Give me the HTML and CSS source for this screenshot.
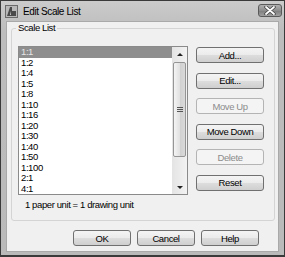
FILE: index.html
```html
<!DOCTYPE html>
<html lang="en">
<head>
    <meta charset="UTF-8">
    <title>Edit Scale List</title>
    <link rel="stylesheet" href="styles.css">
</head>
<body>

    <div class="window">
        <div class="titlebar">
            <svg class="app-icon" width="13" height="13" viewBox="0 0 13 13">
                <rect x="0.5" y="0.5" width="12" height="12" fill="#b8b8b8" stroke="#6a6a6a"/>
                <polygon points="2,11 5,2 7,2 7,6 11,6 11,11" fill="#4a4a4a"/>
                <polygon points="5,10 6,6 6,10" fill="#d0d0d0"/>
            </svg>
            <span class="title">Edit Scale List</span>
            <button class="close-btn">
                <svg width="12" height="9" viewBox="0 0 12 9">
                    <path d="M2 1 L10 8 M10 1 L2 8" stroke="#444" stroke-width="3.4" stroke-linecap="round"/>
                    <path d="M2 1 L10 8 M10 1 L2 8" stroke="#fff" stroke-width="1.8" stroke-linecap="round"/>
                </svg>
            </button>
        </div>

        <div class="client">
            <fieldset class="group">
                <legend>Scale List</legend>
                <div class="group-body">
                    <div class="list-col">
                        <div class="listbox">
                            <ul class="items">
                                <li class="selected">1:1</li>
                                <li>1:2</li>
                                <li>1:4</li>
                                <li>1:5</li>
                                <li>1:8</li>
                                <li>1:10</li>
                                <li>1:16</li>
                                <li>1:20</li>
                                <li>1:30</li>
                                <li>1:40</li>
                                <li>1:50</li>
                                <li>1:100</li>
                                <li>2:1</li>
                                <li>4:1</li>
                            </ul>
                            <div class="scrollbar">
                                <div class="arrow arrow-up"></div>
                                <div class="track">
                                    <div class="thumb">
                                        <span class="grip"></span>
                                    </div>
                                </div>
                                <div class="arrow arrow-down"></div>
                            </div>
                        </div>
                        <p class="note">1 paper unit = 1 drawing unit</p>
                    </div>

                    <div class="side-buttons">
                        <button class="btn">Add...</button>
                        <button class="btn">Edit...</button>
                        <button class="btn" disabled>Move Up</button>
                        <button class="btn">Move Down</button>
                        <button class="btn" disabled>Delete</button>
                        <button class="btn">Reset</button>
                    </div>
                </div>
            </fieldset>

            <div class="footer-buttons">
                <button class="btn btn-wide">OK</button>
                <button class="btn btn-wide">Cancel</button>
                <button class="btn btn-wide">Help</button>
            </div>
        </div>
    </div>

</body>
</html>
```

FILE: styles.css
```css
body {
    margin: 0;
    font-family: 'Liberation Sans', Arial, sans-serif;
    font-size: 9.5px;
    letter-spacing: -0.4px;
    color: #000;
    background-color: #d0d0d0;
}

.window {
    width: 285px;
    height: 257px;
    box-sizing: border-box;
    border: 1px solid #3a3a3a;
    border-bottom-width: 2px;
    background: linear-gradient(#cbcbcb, #bdbdbd 30px, #bababa);
    padding: 0 5px 3px 5px;
    display: flex;
    flex-direction: column;
}

.titlebar {
    height: 20px;
    display: flex;
    align-items: center;
    margin: 0 -4px;
}

.app-icon {
    margin-left: 3px;
    display: block;
}

.title {
    margin-left: 5px;
    font-size: 10px;
    letter-spacing: -0.4px;
}

.close-btn {
    margin-left: auto;
    margin-right: 1px;
    align-self: flex-start;
    margin-top: 3px;
    width: 24px;
    height: 13px;
    padding: 0;
    border: 1px solid #5a5a5a;
    border-radius: 3px;
    background: linear-gradient(#b0b0b0, #8e8e8e 50%, #7c7c7c 51%, #a0a0a0);
    display: flex;
    align-items: center;
    justify-content: center;
}

.close-btn svg {
    display: block;
}

.client {
    flex: 1;
    background-color: #f0f0f0;
    border: 1px solid #a9a9a9;
    padding: 0 3px 0 4px;
    display: flex;
    flex-direction: column;
}

.group {
    margin: 0;
    border: 1px solid #d4d4d4;
    border-radius: 3px;
    padding: 12px 10px 9px 6px;
    min-width: 0;
}

.group legend {
    padding: 0 2px;
    margin-left: -2px;
    line-height: 12px;
    font-size: 9.5px;
}

.group-body {
    display: flex;
    gap: 8px;
}

.list-col {
    width: 170px;
}

.listbox {
    height: 149px;
    box-sizing: border-box;
    border: 1px solid #8a8a8a;
    background-color: #fff;
    display: flex;
}

.items {
    list-style: none;
    margin: 0;
    padding: 0;
    flex: 1;
}

.items li {
    height: 10.5px;
    line-height: 10.5px;
    padding-left: 2px;
}

.items li.selected {
    background-color: #8e8e8e;
    color: #e6e6e6;
}

.scrollbar {
    width: 15px;
    background: linear-gradient(90deg, #e4e4e4, #f2f2f2);
    display: flex;
    flex-direction: column;
}

.arrow {
    height: 14px;
    display: flex;
    align-items: center;
    justify-content: center;
}

.arrow::after {
    content: "";
    border-left: 3px solid transparent;
    border-right: 3px solid transparent;
}

.arrow-up::after {
    border-bottom: 3px solid #222;
}

.arrow-down::after {
    border-top: 3px solid #222;
}

.track {
    flex: 1;
}

.thumb {
    margin: 1px 1px 0 1px;
    height: 95px;
    box-sizing: border-box;
    border: 1px solid #959595;
    border-radius: 2px;
    background: linear-gradient(90deg, #f4f4f4, #e2e2e2 50%, #d0d0d0 51%, #dadada);
    display: flex;
    align-items: center;
    justify-content: center;
}

.grip {
    width: 6px;
    height: 5px;
    background: repeating-linear-gradient(#555 0, #555 1px, transparent 1px, transparent 2px);
}

.note {
    margin: 4px 0 0 7px;
    line-height: 12px;
}

.side-buttons {
    display: flex;
    flex-direction: column;
    gap: 9.6px;
    margin-top: 1px;
}

.btn {
    width: 68px;
    height: 16px;
    padding: 0;
    font-family: 'Liberation Sans', Arial, sans-serif;
    font-size: 9.5px;
    letter-spacing: -0.4px;
    color: #000;
    border: 1px solid #707070;
    border-radius: 3px;
    background: linear-gradient(#f4f4f4, #ebebeb 50%, #dddddd 51%, #cfcfcf);
}

.btn:disabled {
    border-color: #b4b4b4;
    background: #f4f4f4;
    color: #8c8c8c;
}

.footer-buttons {
    display: flex;
    justify-content: flex-end;
    gap: 6px;
    margin-top: 9px;
    padding-right: 16px;
}

.btn-wide {
    width: 58px;
}
```
